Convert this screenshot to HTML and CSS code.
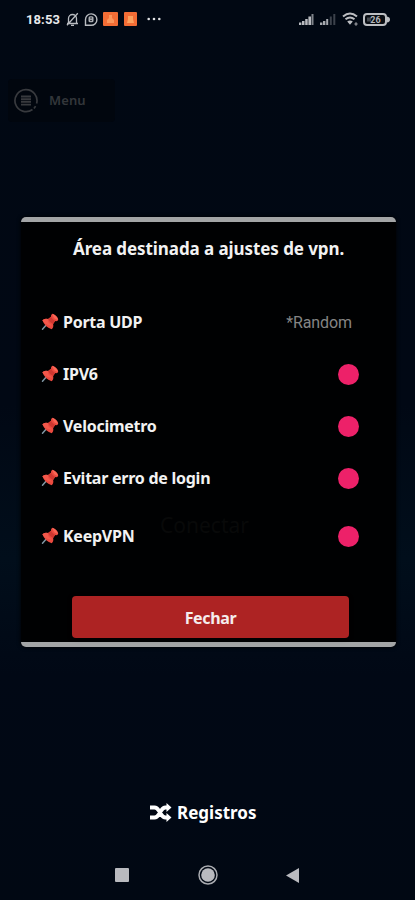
FILE: index.html
```html
<!DOCTYPE html>
<html lang="pt-BR">
<head>
<meta charset="utf-8">
<meta name="viewport" content="width=device-width, initial-scale=1">
<title>VPN</title>
<link rel="stylesheet" href="styles.css">
</head>
<body>
<svg class="defs" width="0" height="0">
  <symbol id="pin" viewBox="0 0 18 18">
    <path d="M6.3 10.8 1.5 16.3" stroke="#7e96a3" stroke-width="1.5" stroke-linecap="round"/>
    <path d="M1.4 7.2Q3.5 4.9 7.1 6L10 3.8Q9.6 1.8 11.4.8Q15.8 2.2 17.2 6.7Q16.4 8.6 14.2 8.1L12.1 11Q13 14.4 10.6 16.2Q3.7 13.8 1.4 7.2Z" fill="#ea4a3f"/>
    <path d="M7.1 6 10 3.8Q11.4 6.6 14.2 8.1L12.1 11Q8.3 9.4 7.1 6Z" fill="#cf3730"/>
    <path d="M11.4.8Q15.8 2.2 17.2 6.7Q12.2 6.6 11.4.8Z" fill="#fb6656"/>
    <path d="M1.4 7.2Q3.5 4.9 7.1 6Q6 9.8 11.3 12.4Q5 13 1.4 7.2Z" fill="#f3584b"/>
  </symbol>
</svg>
<div class="screen">
  <header class="status">
    <span class="clock">18:53</span>
    <svg class="bell" width="13" height="15" viewBox="0 0 13 15" fill="none" stroke="#b9bcc1" stroke-width="1.3"><path d="M1 11.5h11M2.5 11V6.5a4 4 0 0 1 8 0V11M5 13.3h3M1 13.2 11.8 1.2"/></svg>
    <svg class="chat" width="14" height="15" viewBox="0 0 14 15"><path d="M1.5 13.3V7.5A5.7 5.7 0 1 1 7.2 13.3Z" fill="none" stroke="#b9bcc1" stroke-width="1.4"/><rect x="4.5" y="4.3" width="5" height="6" rx="1.5" fill="#a9acb1"/><path d="M6 6h2M6 8.4h2" stroke="#272b33"/></svg>
    <svg class="app" width="15" height="14" viewBox="0 0 15 14"><rect width="15" height="14" rx="1" fill="#f36d35"/><path d="M6 3h3v3l2 2v3H4V8l2-2z" fill="#fc965a"/></svg>
    <svg class="app2" width="13" height="14" viewBox="0 0 13 14"><rect width="13" height="14" rx="1" fill="#f36d35"/><path d="M4 4h5v3l1 4H3l1-4z" fill="#fca25e"/></svg>
    <svg class="dots" width="14" height="4" viewBox="0 0 14 4" fill="#e0e1e3"><circle cx="1.7" cy="2" r="1.3"/><circle cx="7" cy="2" r="1.3"/><circle cx="12.3" cy="2" r="1.3"/></svg>
    <span class="grow"></span>
    <svg class="signal" width="15" height="12" viewBox="0 0 15 12" fill="#b9bbc0"><path d="M0 9.5h2.4V12H0zM3 8h2.5v4H3zM6.2 6h2.5v6H6.2zM9.4 3.5h2.6V12H9.4z"/><path d="M12.5 1h2v11h-2z" fill="#80848b"/></svg>
    <svg class="signal2" width="16" height="12" viewBox="0 0 16 12" fill="#a6a9af"><path d="M0 9.5h2.4V12H0zM3 8h2.4v4H3zM6.2 6h2v6h-2z"/><path d="M9.8 3.5h2V12h-2zM13.3 1h2v11h-2z" fill="#3c424b"/></svg>
    <svg class="wifi" width="17" height="14" viewBox="0 0 17 14" fill="none" stroke="#bcbec2" stroke-width="2"><path d="M1 4.4q7-5.9 14 0M3.5 7.3q4.5-3.7 9 0"/><path d="m5.2 9.4 2.8 3.3 2.8-3.3q-2.8-2-5.6 0Z" fill="#bcbec2" stroke="none"/><path d="M12.5 12h3M14 10.3v3.4" stroke="#8b8e94" stroke-width="1.3"/></svg>
    <svg width="27" height="13" viewBox="0 0 27 13"><rect x="1" y="1" width="22" height="11" rx="3" fill="#090d13" stroke="#bcbec2" stroke-width="2"/><path d="M24 3.5q3 .5 3 3t-3 3z" fill="#bcbec2"/><path d="M4 4.5h4v4H4z" fill="#44494f"/><text class="charge" x="12.5" y="9.8" text-anchor="middle">26</text></svg>
  </header>

  <div class="menu">
    <svg width="24" height="25" viewBox="0 0 24 25" fill="none" stroke="#383a3e"><path d="M18.5 21.5A11 11 0 1 1 22.6 15.5M20 20.5l1.6-2.4" stroke-width="1.7"/><path d="M7 8.5h10M7 11.2h10M7 13.9h10M7 16.6h10" stroke-width="1.9"/></svg>
    <span>Menu</span>
  </div>

  <main class="dialog">
    <h1>Área destinada a ajustes de vpn.</h1>
    <ul class="options">
      <li><svg class="pin"><use href="#pin"/></svg><span class="label">Porta UDP</span><span class="port">*Random</span></li>
      <li><svg class="pin"><use href="#pin"/></svg><span class="label">IPV6</span><i class="toggle"></i></li>
      <li><svg class="pin"><use href="#pin"/></svg><span class="label">Velocimetro</span><i class="toggle"></i></li>
      <li><svg class="pin"><use href="#pin"/></svg><span class="label">Evitar erro de login</span><i class="toggle"></i></li>
      <li class="last"><svg class="pin"><use href="#pin"/></svg><span class="label">KeepVPN</span><i class="toggle"></i></li>
    </ul>
    <button class="close">Fechar</button>
    <span class="behind">Conectar</span>
  </main>

  <div class="logs">
    <svg width="22" height="19" viewBox="0 0 22 19"><path d="M0 4.5h4.5q2.5 0 4.2 3l2.6 4q1.7 3 4.2 3H18M0 14.5h4.5q2.5 0 4.2-3l2.6-4q1.7-3 4.2-3H18" fill="none" stroke="#fff" stroke-width="3.8"/><path d="m16.5 0 5 4.5-5 4.5zM16.5 10l5 4.5-5 4.5z" fill="#fff"/></svg>
    <span>Registros</span>
  </div>

  <nav class="navbar">
    <svg width="14" height="14"><rect width="14" height="14" rx="1" fill="#b9babf"/></svg>
    <svg width="20" height="20" viewBox="0 0 20 20"><circle cx="10" cy="10" r="9" fill="none" stroke="#aaacb1" stroke-width="1.5"/><circle cx="10" cy="10" r="6.8" fill="#b9babf"/></svg>
    <svg width="13" height="15" viewBox="0 0 13 15"><path d="M13 0v15L0 7.5z" fill="#b9babf"/></svg>
  </nav>
</div>
</body>
</html>
```
FILE: styles.css
```css
* { box-sizing: border-box; }
body { margin: 0; background: #010813; color: #f2f2f2; font-family: "Noto Sans", sans-serif; }
svg { flex: none; display: block; }
.defs { position: absolute; }
.screen {
  height: 900px;
  display: flex;
  flex-direction: column;
  overflow: hidden;
  background: linear-gradient(#010813 0%, #010814 45%, #010e1b 62%, #010815 75%, #010813 100%);
}
.status { height: 39px; padding: 0 25px 0 26px; display: flex; align-items: center; }
.clock { font: 700 13px Roboto, sans-serif; letter-spacing: .1px; width: 40px; color: #e8e9eb; }
.chat { margin-left: 5px; }
.app { margin-left: 5px; }
.app2 { margin-left: 6px; }
.dots { margin-left: 10px; }
.grow { flex: 1; }
.signal2 { margin-left: 6px; }
.wifi { margin: 0 4px 0 6px; }
.charge { font: 700 9px Roboto, sans-serif; fill: #b4b6ba; }
.menu {
  width: 107px; height: 44px; margin: 40px 0 0 8px; padding-left: 6px;
  display: flex; align-items: center; gap: 11px;
  background: #01060e; border-radius: 4px;
  color: #33363a; font-size: 13px; font-weight: 600; letter-spacing: .1px;
}
.dialog {
  position: relative;
  width: 375px; height: 430px; margin: 95px 0 0 21px; flex: none;
  border: solid #a3a5a6; border-width: 5px 0; border-radius: 5px;
  background: #000102; box-shadow: 0 0 4px #000;
  display: flex; flex-direction: column;
}
h1 { margin: 14px 0 0; height: 26px; line-height: 26px; padding-left: 52px; font-size: 17px; font-weight: 700; letter-spacing: -.08px; white-space: nowrap; }
.options { list-style: none; margin: 34px 0 0; padding: 0 37px 0 20px; }
.options li { height: 52px; display: flex; align-items: center; }
.options .last { height: 64px; }
.pin { width: 18px; height: 18px; margin-right: 4px; }
.label { flex: 1; font-size: 16px; line-height: 24px; font-weight: 700; letter-spacing: -.25px; white-space: nowrap; }
.port { font: 16px Roboto, sans-serif; letter-spacing: -.1px; color: #858585; margin-right: 7px; padding-top: 1px; }
.toggle { width: 21px; height: 21px; margin-top: 2px; border-radius: 50%; background: #ed2169; }
.close {
  width: 277px; height: 42px; margin: 28px 0 0 51px; padding: 2px 0 0; border: 0; border-radius: 4px; flex: none;
  background: #ad2323; color: #f5eded; font: 700 16px "Noto Sans", sans-serif; letter-spacing: -.35px;
  box-shadow: 0 1px 4px rgba(0, 0, 0, .5);
}
.behind { position: absolute; left: 139px; top: 289px; font-size: 21px; line-height: 28px; color: #080909; }
.logs { height: 28px; margin: 152px 0 0 150px; display: flex; align-items: center; gap: 5px; font-size: 17px; font-weight: 700; color: #fff; }
.navbar { height: 50px; margin-top: 24px; padding: 0 116px 0 115px; display: flex; align-items: center; justify-content: space-between; }
```
